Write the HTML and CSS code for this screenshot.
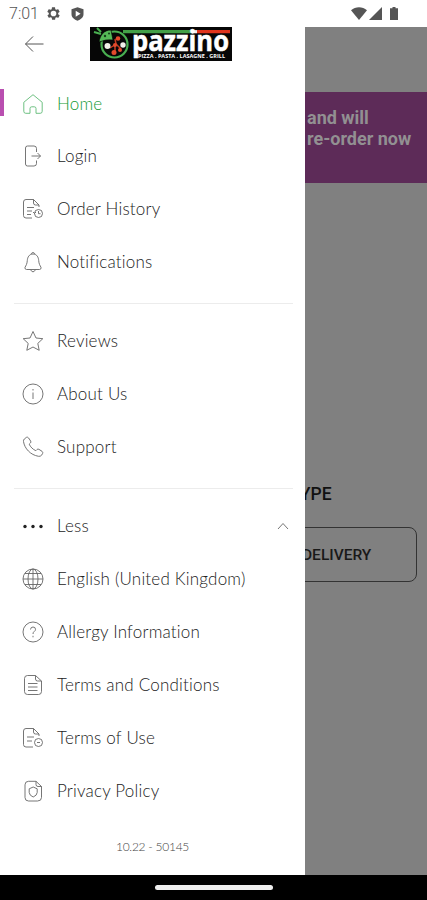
FILE: index.html
```html
<!DOCTYPE html>
<html lang="en">
<head>
    <meta charset="UTF-8">
    <meta name="viewport" content="width=device-width, initial-scale=1.0">
    <title>Pazzino</title>
    <link rel="stylesheet" href="styles.css">
</head>
<body>
<div class="phone">
    <div class="status-bar">
        <span class="time">7:01</span>
        <svg class="gear" width="15" height="15" viewBox="0 0 24 24"><path fill-rule="evenodd" d="M19.4 13c0-.3.1-.7.1-1s0-.7-.1-1l2.1-1.6c.2-.1.2-.4.1-.6l-2-3.5c-.1-.2-.4-.3-.6-.2l-2.5 1c-.5-.4-1.1-.7-1.7-1L14.5 2.4c0-.2-.2-.4-.5-.4h-4c-.3 0-.5.2-.5.4L9.100 5.100c-.6.2-1.200.6-1.700 1L4.900 5.100c-.2-.1-.5 0-.6.200l-2 3.500c-.1.200-.1.500.1.600L4.600 11c0 .3-.1.700-.1 1s0 .7.1 1l-2.100 1.600c-.2.1-.2.400-.1.600l2 3.500c.1.2.4.3.6.2l2.500-1c.5.4 1.100.7 1.700 1l.4 2.700c0 .2.200.4.500.4h4c.3 0 .5-.2.5-.4l.4-2.700c.6-.2 1.200-.6 1.700-1l2.500 1c.2.1.5 0 .6-.2l2-3.500c.1-.2.1-.5-.1-.6zM12 16.500a4.500 4.500 0 1 1 0-9 4.500 4.500 0 0 1 0 9z"/></svg>
        <svg class="shield" width="13" height="14" viewBox="0 0 13 14"><path fill-rule="evenodd" d="M6.500 0.300L12.500 2.300V7.300C12.500 10.500 9.500 12.800 6.500 13.800C3.500 12.800 .5 10.500 .5 7.300V2.300zM4.700 3.700V9.700L9.600 6.700z"/></svg>
        <div class="signals">
            <svg width="16" height="13" viewBox="0 0 16 13"><path d="M0 3.200C4.500-.9 11.500-.9 16 3.200L8 13z"/></svg>
            <svg width="13" height="13" viewBox="0 0 13 13"><path d="M13 0V13H0z"/></svg>
            <svg class="battery" width="8" height="13" viewBox="0 0 8 13"><path d="M2.500 0h3v1.300H8V13H0V1.300h2.500z"/></svg>
        </div>
    </div>

    <div class="screen">
        <nav class="drawer">
            <div class="drawer-header">
                <svg class="back" width="20" height="18" viewBox="0 0 20 18"><path d="M19.500 9H1.500M9 1.500L1.500 9L9 16.500"/></svg>
                <svg class="logo" width="142" height="34" viewBox="0 0 142 34">
                    <rect width="142" height="34" fill="#060606"/>
                    <path d="M33 4.700H102" stroke="#43a047" stroke-width="3.200"/>
                    <path d="M102 4.700H107" stroke="#eee" stroke-width="3.200"/>
                    <path d="M107 4.700H140" stroke="#e0341c" stroke-width="3.200"/>
                    <circle cx="24.500" cy="17.500" r="13" fill="#080808" stroke="#49ae50" stroke-width="2.200"/>
                    <path d="M25 12L26 17L20 21M26 17L31 22M25 17V25" fill="none" stroke="#c83b22" stroke-width="1.500"/>
                    <g fill="#f4f1ea"><circle cx="17.500" cy="19" r="3"/><circle cx="33" cy="18" r="2.700"/></g>
                    <g fill="#e34b2c"><circle cx="28" cy="11.500" r="2.300"/><circle cx="25" cy="18" r="2"/><circle cx="24" cy="25.500" r="2.500"/><circle cx="30" cy="23" r="2"/></g>
                    <path d="M9 15C10 8 14 3 21 3L23 13Q16 12 9 15z" fill="#55b957" stroke="#060606" stroke-width=".7"/>
                    <path d="M11 7L4 5M11 5L7 1" stroke="#49ae50" stroke-width="2"/>
                    <g fill="#123f19"><circle cx="15" cy="9" r="1.200"/><circle cx="19" cy="6.500" r="1"/></g>
                    <text class="logo-name" x="42" y="24" textLength="97" lengthAdjust="spacingAndGlyphs">pazzino</text>
                    <text class="logo-tag" x="48" y="31" textLength="87" lengthAdjust="spacingAndGlyphs">PIZZA . PASTA . LASAGNE . GRILL</text>
                </svg>
            </div>

            <ul class="menu">
                <li class="active">
                    <svg viewBox="0 0 22 22"><path d="M1.800 9.300L11 1.700L20.200 9.300V18.300Q20.200 20.300 18.200 20.300H14V15.500Q14 13.800 12.300 13.800H9.700Q8 13.800 8 15.500V20.300H3.800Q1.800 20.300 1.800 18.300z"/></svg>
                    <span>Home</span>
                </li>
                <li>
                    <svg viewBox="0 0 22 22"><path d="M14.500 7V3.500Q14.500 1 12 1H5.500Q3.500 1 3.500 3V19Q3.500 21 5.500 21H12Q14.500 21 14.500 18.500V15.500M9.500 11H18.500M15.500 8L18.500 11L15.500 14"/></svg>
                    <span>Login</span>
                </li>
                <li>
                    <svg viewBox="0 0 22 22"><path d="M10 20H4Q1.500 20 1.500 17.500V4Q1.500 1.500 4 1.500H11.500L17 7V9M11.500 1.500V5Q11.500 7 13.500 7H17M5 9.500H12M5 13H10M5 16.500H9"/><circle cx="16.500" cy="15.500" r="4"/><path d="M16.500 13V15.700H18.500M11 14L12.500 15.500L14 14"/></svg>
                    <span>Order History</span>
                </li>
                <li>
                    <svg viewBox="0 0 22 22"><path d="M9.300 3.200V2.500Q11 .3 12.700 2.500V3.200M11 3C7 3 5.500 6.500 5.300 9.500C5.100 13 4 14.500 3 16.300Q2.500 18.300 4.500 18.500H17.500Q19.500 18.300 19 16.300C18 14.500 16.900 13 16.700 9.500C16.500 6.500 15 3 11 3zM8.500 18.700Q11 23 13.500 18.700"/></svg>
                    <span>Notifications</span>
                </li>
            </ul>

            <ul class="menu">
                <li>
                    <svg viewBox="0 0 22 22"><path d="M11 1.500L14 8L20.800 8.700L15.800 13.400L17.200 20.300L11 17L4.800 20.300L6.200 13.400L1.200 8.700L8 8z"/></svg>
                    <span>Reviews</span>
                </li>
                <li>
                    <svg viewBox="0 0 22 22"><circle cx="11" cy="11" r="10"/><path d="M11 9.500V16M11 6V7.500"/></svg>
                    <span>About Us</span>
                </li>
                <li>
                    <svg viewBox="0 0 22 22"><path d="M2.300 3L4.500 1.300Q5.700.8 6.600 2L8.700 5.100Q9.300 6.200 8.300 7.100L7.200 8.200C8.500 11 10.800 13.300 13.800 14.700L14.900 13.600Q15.800 12.700 16.900 13.300L20 15.300Q21.200 16.200 20.600 17.500L19.500 19.300Q18.400 20.600 16.500 20.300C8.500 19 2.500 12.500 1.500 5.500Q1.300 4 2.300 3z"/></svg>
                    <span>Support</span>
                </li>
            </ul>

            <ul class="menu">
                <li>
                    <svg class="dots" viewBox="0 0 22 22"><circle cx="3" cy="11.500" r="1.700"/><circle cx="11" cy="11.500" r="1.700"/><circle cx="19" cy="11.500" r="1.700"/></svg>
                    <span>Less</span>
                    <svg class="chevron" viewBox="0 0 12 8"><path d="M1 7L6 1.500L11 7"/></svg>
                </li>
                <li>
                    <svg viewBox="0 0 22 22"><circle cx="11" cy="11" r="10"/><ellipse cx="11" cy="11" rx="5" ry="10"/><path d="M11 1V21M1 11H21M2.800 5.500H19.200M2.800 16.500H19.200"/></svg>
                    <span>English (United Kingdom)</span>
                </li>
                <li>
                    <svg viewBox="0 0 22 22"><circle cx="11" cy="11" r="10"/><path d="M8.500 8.500Q8.700 6 11 6Q13.500 6 13.500 8.300Q13.500 9.600 12.200 10.500Q11 11.300 11 13M11 14.800V16.300"/></svg>
                    <span>Allergy Information</span>
                </li>
                <li>
                    <svg viewBox="0 0 22 22"><path d="M13.500 1.500H5.500Q2.500 1.500 2.500 4.500V17.500Q2.500 20.500 5.500 20.500H16.500Q19.500 20.500 19.500 17.500V7zM13.500 1.500V5Q13.500 7 15.500 7H19.500M6 9.500H15.500M6 13H15.500M6 16.500H15.500"/></svg>
                    <span>Terms and Conditions</span>
                </li>
                <li>
                    <svg viewBox="0 0 22 22"><path d="M11 20H4Q1.500 20 1.500 17.500V4Q1.500 1.500 4 1.500H11.500L17 7V9M11.500 1.500V5Q11.500 7 13.500 7H17M5 10H12M5 14H10"/><circle cx="16.500" cy="15.500" r="4"/><path d="M15 15.500H18"/></svg>
                    <span>Terms of Use</span>
                </li>
                <li>
                    <svg viewBox="0 0 22 22"><path d="M14 1.300H6.500Q3 1.300 3 4.800V17.500Q3 21 6.500 21H15.500Q19.500 21 19.500 17.500V6.500zM14 1.300V4.500Q14 6.500 16 6.500H19.500M11.200 7L15.200 8.800V12.500Q15 15.500 11.200 17Q7.400 15.500 7.200 12.500V8.800z"/></svg>
                    <span>Privacy Policy</span>
                </li>
            </ul>
            <div class="version">10.22 - 50145</div>
        </nav>

        <main class="page">
            <div class="banner">and will<br>re-order now</div>
            <h2>TYPE</h2>
            <div class="delivery">DELIVERY</div>
        </main>
    </div>

    <div class="nav-bar"><div class="handle"></div></div>
</div>
</body>
</html>
```
FILE: styles.css
```css
* {
    box-sizing: border-box;
}

body {
    margin: 0;
    background-color: #fff;
    font-family: Lato, "Liberation Sans", sans-serif;
}

.phone {
    display: flex;
    flex-direction: column;
    width: 427px;
    height: 900px;
    overflow: hidden;
}

.status-bar {
    display: flex;
    align-items: center;
    height: 27px;
    padding: 0 29px 0 9px;
    fill: #555;
}

.time {
    width: 37px;
    font: 300 16px Roboto, sans-serif;
    color: #555;
}

.shield {
    margin-left: 10px;
}

.signals {
    display: flex;
    gap: 2px;
    margin-left: auto;
}

.battery {
    margin: 0 0 0 6px;
}

.screen {
    display: flex;
    height: 848px;
}

.drawer {
    flex: 0 0 305px;
    background-color: #fff;
}

.drawer-header {
    display: flex;
    align-items: flex-start;
    height: 50px;
}

.back {
    margin: 8px 46px 0 24px;
    fill: none;
    stroke: #555;
}

.logo-name {
    font: bold 28px "Open Sans", sans-serif;
    fill: #fff;
    stroke: #fff;
    stroke-width: 0.5;
}

.logo-tag {
    font: bold 4.5px "Open Sans", sans-serif;
    fill: #fff;
}

.menu {
    list-style: none;
    margin: 0;
    padding: 0;
}

/* divider between the menu sections */
.menu + .menu::before {
    content: "";
    display: block;
    height: 1px;
    margin: 14px 12px 11px 14px;
    background-color: #ececec;
}

.menu li {
    display: flex;
    align-items: center;
    height: 53px;
    padding: 0 16px 2px 22px;
    font-size: 17px;
    font-weight: 300;
    letter-spacing: 0.2px;
    color: #222;
}

.menu svg {
    width: 22px;
    height: 22px;
    margin-right: 13px;
    fill: none;
    stroke: #666;
    stroke-width: 0.9;
}

.menu .active {
    padding-bottom: 0;
    color: #129a35;
    background: linear-gradient(#b94fb0, #b94fb0) 0 12px / 4px 27px no-repeat;
}

.menu .active svg {
    stroke: #5fba75;
}

.menu .dots {
    fill: #222;
    stroke: none;
}

.menu .chevron {
    width: 12px;
    height: 8px;
    margin: 0 0 0 auto;
}

.version {
    margin-top: 21px;
    text-align: center;
    font-size: 12px;
    font-weight: 300;
    letter-spacing: -0.25px;
    line-height: 16px;
    color: #444;
}

/* page behind the open drawer, dimmed */
.page {
    flex: 1;
    min-width: 0;
    overflow: hidden;
    background-color: #808080;
    font-family: Roboto, sans-serif;
}

.banner {
    height: 91px;
    margin-top: 65px;
    padding: 15px 0 0 2px;
    background-color: #5d2b58;
    font-size: 18px;
    font-weight: bold;
    line-height: 21px;
    color: #929092;
    white-space: nowrap;
}

h2 {
    margin: 300px 0 0 -16px;
    font-size: 17.5px;
    font-weight: 500;
    line-height: 22px;
    color: #111;
}

.delivery {
    width: 128px;
    height: 55px;
    margin: 22px 0 0 -16px;
    padding-left: 12px;
    border: 1px solid #333;
    border-radius: 8px;
    font-size: 15.5px;
    font-weight: 500;
    line-height: 55px;
    color: #191919;
}

.nav-bar {
    display: flex;
    justify-content: center;
    align-items: center;
    height: 25px;
    background-color: #000;
}

.handle {
    width: 118px;
    height: 5px;
    border-radius: 3px;
    background-color: #eee;
}
```
